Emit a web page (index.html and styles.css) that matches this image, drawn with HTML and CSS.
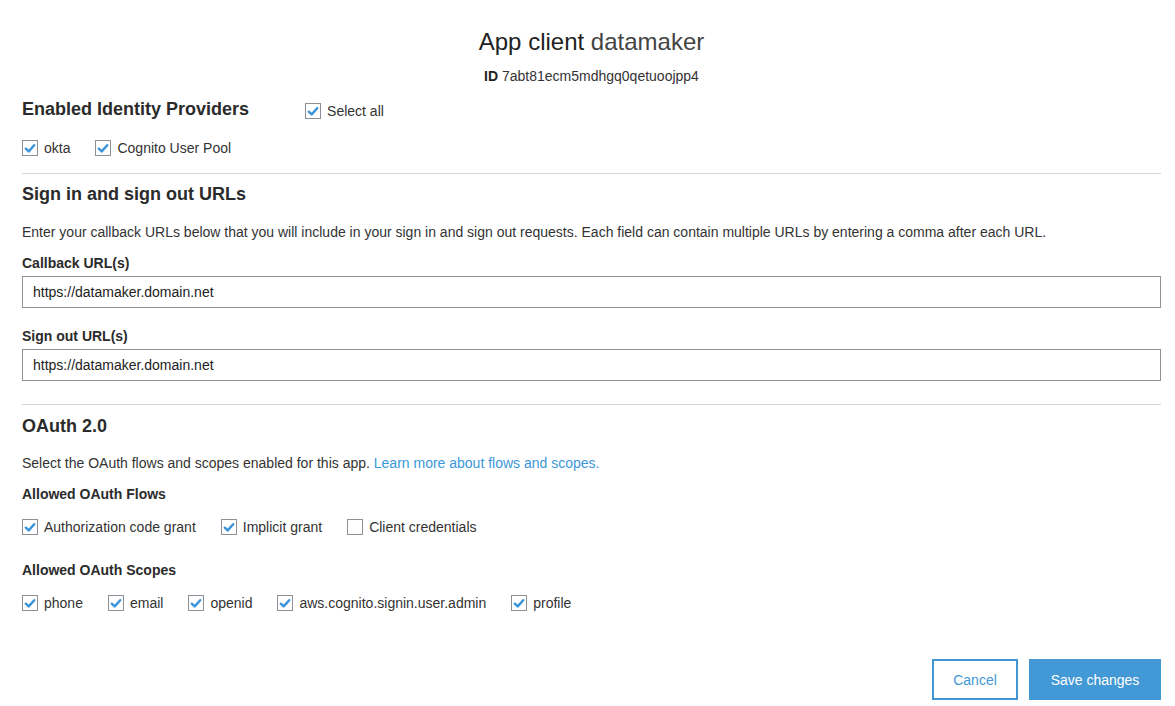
FILE: index.html
```html
<!DOCTYPE html>
<html>
<head>
<meta charset="utf-8">
<link rel="stylesheet" href="styles.css">
</head>
<body>
<div class="page">
  <header class="head">
    <h1 class="title">App client <span class="title-name">datamaker</span></h1>
    <div class="client-id"><b>ID</b> 7abt81ecm5mdhgq0qetuoojpp4</div>
  </header>

  <section class="section first">
    <div class="heading-row">
      <h2 class="heading">Enabled Identity Providers</h2>
      <label class="check"><span class="box on"><svg viewBox="0 0 16 16"><path d="M3.2 8.2 L6.5 11.3 L12.8 4.3" /></svg></span>Select all</label>
    </div>
    <div class="check-row providers">
      <label class="check"><span class="box on"><svg viewBox="0 0 16 16"><path d="M3.2 8.2 L6.5 11.3 L12.8 4.3" /></svg></span>okta</label>
      <label class="check"><span class="box on"><svg viewBox="0 0 16 16"><path d="M3.2 8.2 L6.5 11.3 L12.8 4.3" /></svg></span>Cognito User Pool</label>
    </div>
  </section>

  <section class="section urls">
    <h2 class="heading">Sign in and sign out URLs</h2>
    <p class="desc">Enter your callback URLs below that you will include in your sign in and sign out requests. Each field can contain multiple URLs by entering a comma after each URL.</p>
    <div class="label">Callback URL(s)</div>
    <input class="field" type="text" value="https://datamaker.domain.net">
    <div class="label second">Sign out URL(s)</div>
    <input class="field" type="text" value="https://datamaker.domain.net">
  </section>

  <section class="section oauth">
    <h2 class="heading">OAuth 2.0</h2>
    <p class="desc">Select the OAuth flows and scopes enabled for this app. <a class="link" href="#">Learn more about flows and scopes.</a></p>
    <div class="label">Allowed OAuth Flows</div>
    <div class="check-row">
      <label class="check"><span class="box on"><svg viewBox="0 0 16 16"><path d="M3.2 8.2 L6.5 11.3 L12.8 4.3" /></svg></span>Authorization code grant</label>
      <label class="check"><span class="box on"><svg viewBox="0 0 16 16"><path d="M3.2 8.2 L6.5 11.3 L12.8 4.3" /></svg></span>Implicit grant</label>
      <label class="check"><span class="box"></span>Client credentials</label>
    </div>
    <div class="label scopes">Allowed OAuth Scopes</div>
    <div class="check-row">
      <label class="check"><span class="box on"><svg viewBox="0 0 16 16"><path d="M3.2 8.2 L6.5 11.3 L12.8 4.3" /></svg></span>phone</label>
      <label class="check"><span class="box on"><svg viewBox="0 0 16 16"><path d="M3.2 8.2 L6.5 11.3 L12.8 4.3" /></svg></span>email</label>
      <label class="check"><span class="box on"><svg viewBox="0 0 16 16"><path d="M3.2 8.2 L6.5 11.3 L12.8 4.3" /></svg></span>openid</label>
      <label class="check"><span class="box on"><svg viewBox="0 0 16 16"><path d="M3.2 8.2 L6.5 11.3 L12.8 4.3" /></svg></span>aws.cognito.signin.user.admin</label>
      <label class="check"><span class="box on"><svg viewBox="0 0 16 16"><path d="M3.2 8.2 L6.5 11.3 L12.8 4.3" /></svg></span>profile</label>
    </div>
  </section>

  <footer class="actions">
    <button class="btn btn-cancel">Cancel</button>
    <button class="btn btn-save">Save changes</button>
  </footer>
</div>
</body>
</html>
```

FILE: styles.css
```css
* { box-sizing: border-box; }

body {
  margin: 0;
  background: #fff;
  font-family: "Liberation Sans", Arial, Helvetica, sans-serif;
  color: #333;
}

.page {
  padding: 0 14px 0 22px;
}

.head {
  text-align: center;
}

.title {
  margin: 27px 0 0;
  font-size: 24px;
  line-height: 30px;
  font-weight: normal;
  color: #222;
}

.title-name {
  color: #444;
}

.client-id {
  margin-top: 11px;
  font-size: 14px;
  line-height: 16px;
  color: #333;
}

.client-id b {
  color: #222;
}

.section {
  border-bottom: 1px solid #d5d5d5;
}

.section.first {
  margin-top: 12px;
  padding-bottom: 15px;
}

.section.urls {
  padding-top: 8px;
  padding-bottom: 23px;
}

.section.oauth {
  border-bottom: none;
  padding-top: 9px;
}

.heading-row {
  display: flex;
  align-items: center;
  gap: 56px;
}

.heading {
  margin: 0;
  font-size: 18px;
  line-height: 24px;
  font-weight: bold;
  color: #2b2b2b;
}

.heading-row .check {
  margin-top: 5px;
}

.check-row {
  display: flex;
  align-items: center;
  margin-top: 14px;
}

.check-row.providers {
  margin-top: 17px;
}

.check {
  display: inline-flex;
  align-items: center;
  font-size: 14px;
  line-height: 20px;
  color: #333;
  margin-right: 25px;
}

.box {
  width: 16px;
  height: 16px;
  border: 1px solid #8d9096;
  background: #fff;
  margin-right: 6px;
  display: inline-flex;
  align-items: center;
  justify-content: center;
  flex: none;
}

.box svg {
  width: 15px;
  height: 15px;
}

.box svg path {
  fill: none;
  stroke: #3b93d8;
  stroke-width: 2.8;
  stroke-linecap: round;
  stroke-linejoin: round;
}

.desc {
  margin: 17px 0 0;
  font-size: 14px;
  line-height: 18px;
  color: #333;
}

.oauth .desc {
  margin-top: 16px;
}

.link {
  color: #3b97d8;
  text-decoration: none;
}

.label {
  margin-top: 13px;
  font-size: 14px;
  line-height: 18px;
  font-weight: bold;
  color: #2b2b2b;
}

.label.second {
  margin-top: 19px;
}

.label.scopes {
  margin-top: 24px;
}

.field {
  display: block;
  width: 100%;
  height: 32px;
  margin-top: 4px;
  padding: 0 10px;
  border: 1px solid #8f9394;
  border-radius: 0;
  font-family: "Liberation Sans", Arial, Helvetica, sans-serif;
  font-size: 14px;
  color: #222;
  background: #fff;
  outline: none;
}

.actions {
  display: flex;
  justify-content: flex-end;
  gap: 11px;
  margin-top: 46px;
}

.btn {
  height: 41px;
  font-family: "Liberation Sans", Arial, Helvetica, sans-serif;
  font-size: 14px;
  border-radius: 0;
  cursor: pointer;
}

.btn-cancel {
  width: 86px;
  border: 2px solid #4197d6;
  background: #fff;
  color: #4197d6;
}

.btn-save {
  width: 132px;
  border: none;
  background: #4299d6;
  color: #fff;
}
```
